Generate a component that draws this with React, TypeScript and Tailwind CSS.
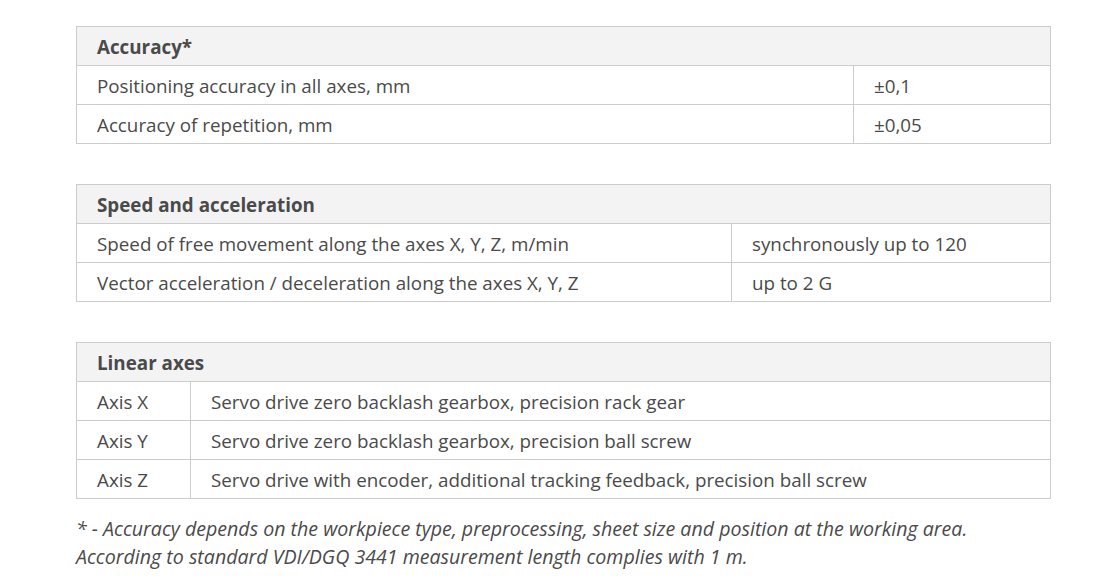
import React from "react";

const font = { fontFamily: '"Open Sans", "Noto Sans", sans-serif' };

function Row({ cols, widths }: { cols: string[]; widths: string }) {
  return (
    <div className={`grid ${widths} border-t border-[#cccccc]`}>
      {cols.map((c, i) => (
        <div
          key={i}
          className={`h-[38px] pt-[2px] flex items-center whitespace-nowrap ${i === 0 ? "pl-[20px]" : "pl-[20px] border-l border-[#cccccc]"}`}
        >
          {c}
        </div>
      ))}
    </div>
  );
}

function Table({ title, rows, widths }: { title: string; rows: string[][]; widths: string }) {
  return (
    <div className="border border-[#cccccc] w-[975px]">
      <div className="h-[38px] pt-[2px] flex items-center pl-[20px] bg-[#f3f3f3] font-bold">{title}</div>
      {rows.map((r, i) => (
        <Row key={i} cols={r} widths={widths} />
      ))}
    </div>
  );
}

export default function App() {
  return (
    <div className="w-[1105px] h-[580px] bg-white overflow-hidden text-[#4a4a4a] text-[18.8px]" style={font}>
      <div className="pl-[76px] pt-[26px] flex flex-col gap-[40px]">
        <Table
          title="Accuracy*"
          widths="grid-cols-[776px_1fr]"
          rows={[
            ["Positioning accuracy in all axes, mm", "±0,1"],
            ["Accuracy of repetition, mm", "±0,05"],
          ]}
        />
        <Table
          title="Speed and acceleration"
          widths="grid-cols-[654px_1fr]"
          rows={[
            ["Speed of free movement along the axes X, Y, Z, m/min", "synchronously up to 120"],
            ["Vector acceleration / deceleration along the axes X, Y, Z", "up to 2 G"],
          ]}
        />
        <div>
          <Table
            title="Linear axes"
            widths="grid-cols-[113px_1fr]"
            rows={[
              ["Axis X", "Servo drive zero backlash gearbox, precision rack gear"],
              ["Axis Y", "Servo drive zero backlash gearbox, precision ball screw"],
              ["Axis Z", "Servo drive with encoder, additional tracking feedback, precision ball screw"],
            ]}
          />
          <p className="italic leading-[28px] mt-[16px] text-[19.6px] whitespace-nowrap">
            * - Accuracy depends on the workpiece type, preprocessing, sheet size and position at the working area.
            <br />
            According to standard VDI/DGQ 3441 measurement length complies with 1 m.
          </p>
        </div>
      </div>
    </div>
  );
}
